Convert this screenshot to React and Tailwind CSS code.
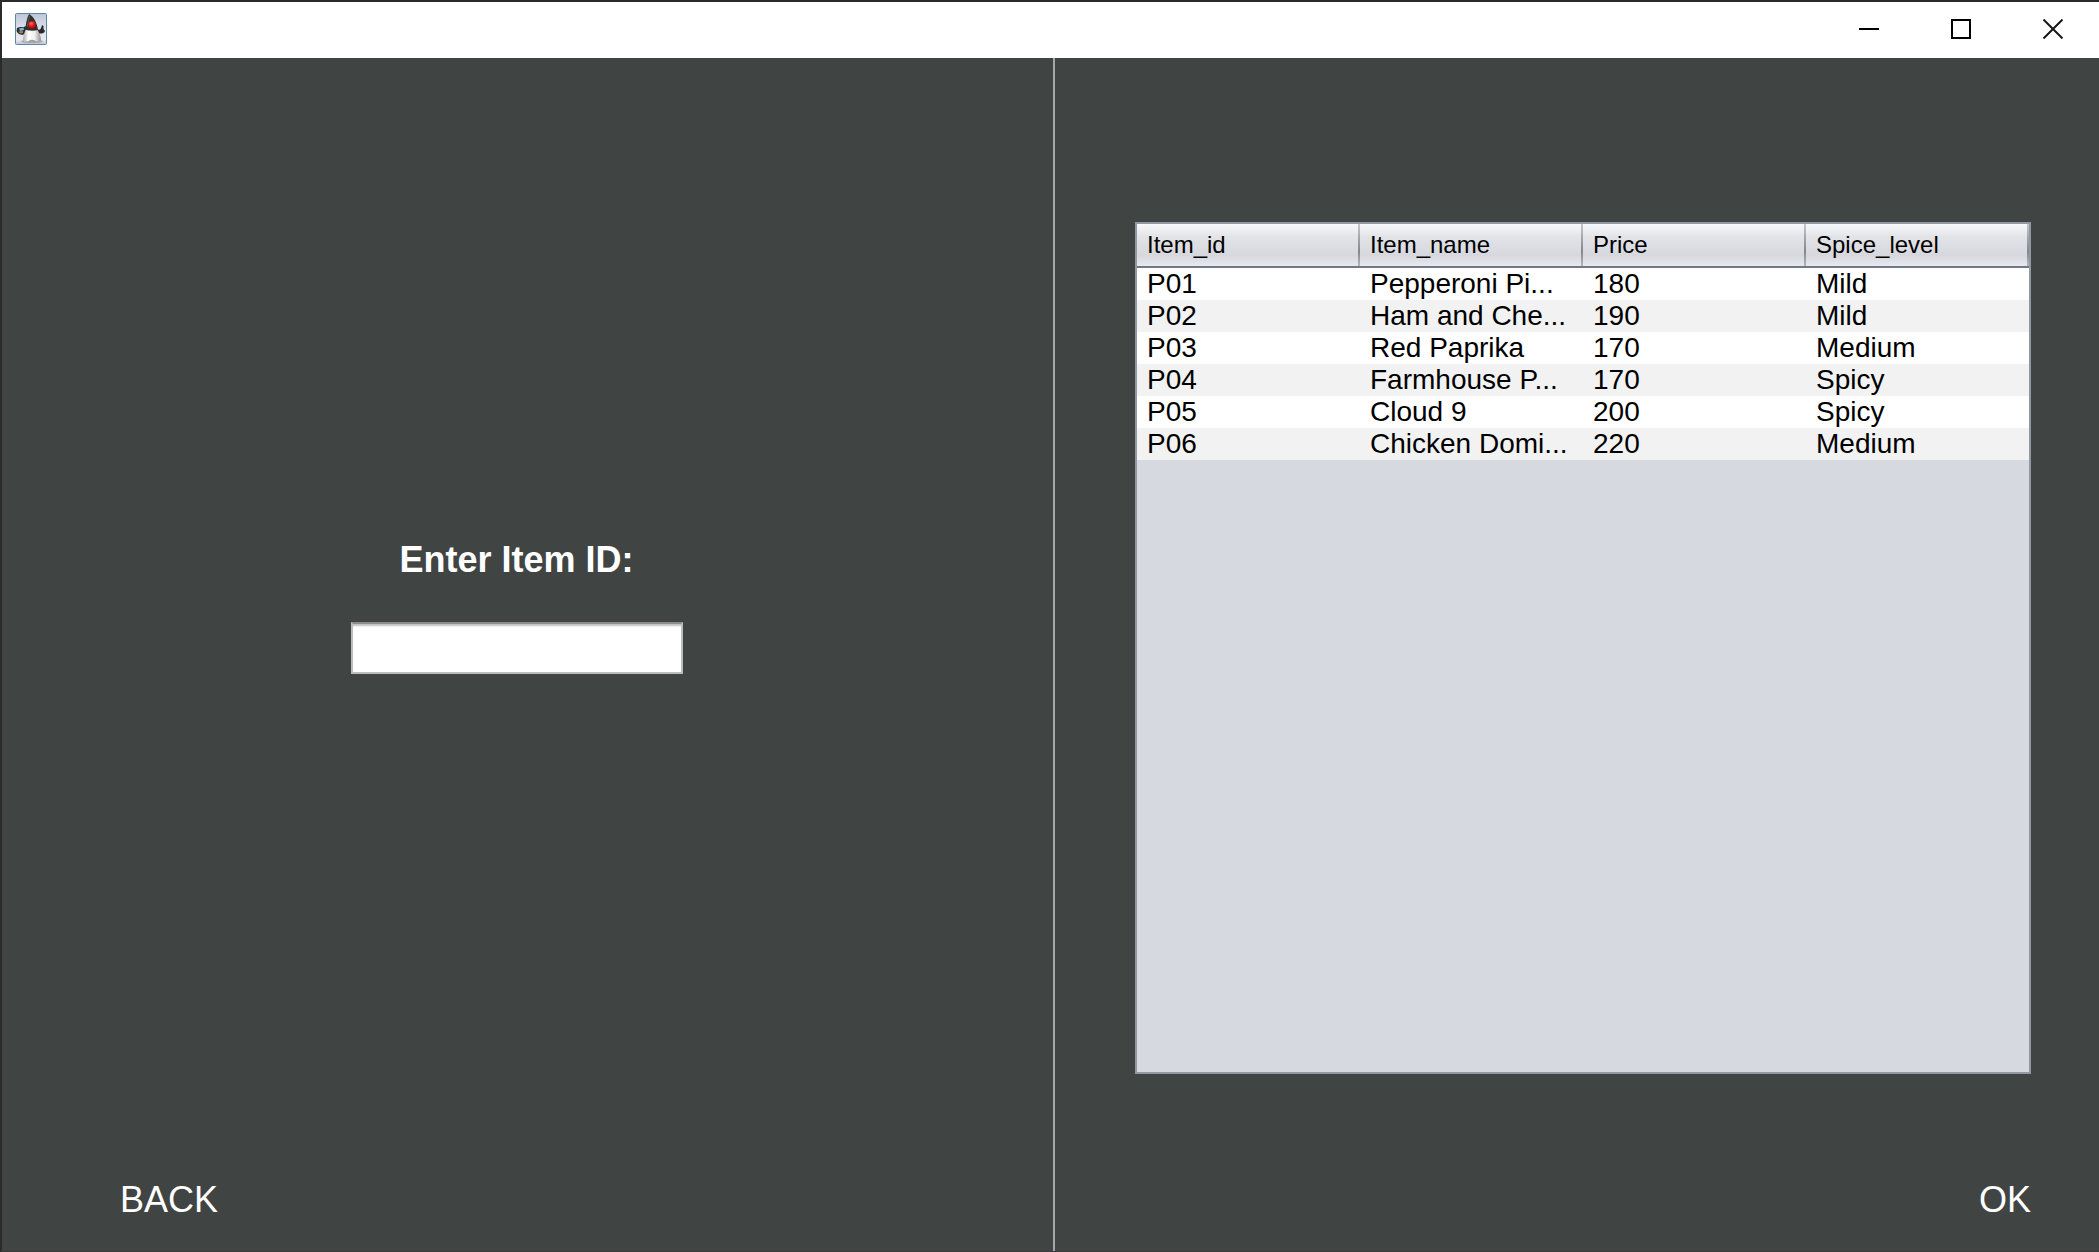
import React from "react";

const columns = ["Item_id", "Item_name", "Price", "Spice_level"];

const items = [
  ["P01", "Pepperoni Pi...", "180", "Mild"],
  ["P02", "Ham and Che...", "190", "Mild"],
  ["P03", "Red Paprika", "170", "Medium"],
  ["P04", "Farmhouse P...", "170", "Spicy"],
  ["P05", "Cloud 9", "200", "Spicy"],
  ["P06", "Chicken Domi...", "220", "Medium"],
];

function DukeIcon() {
  return (
    <svg className="size-8" viewBox="0 0 32 32" aria-hidden="true">
      <defs>
        <linearGradient id="tile" x1="0" y1="0" x2="0" y2="1">
          <stop offset="0" stopColor="#bcc6d8" />
          <stop offset="0.5" stopColor="#dde2ec" />
          <stop offset="0.85" stopColor="#e6e8ee" />
          <stop offset="1" stopColor="#bfc3cc" />
        </linearGradient>
        <linearGradient id="belly" x1="0" y1="0" x2="1" y2="0">
          <stop offset="0" stopColor="#a9a9a9" />
          <stop offset="0.3" stopColor="#ffffff" />
          <stop offset="0.65" stopColor="#efefef" />
          <stop offset="1" stopColor="#8f8f8f" />
        </linearGradient>
        <radialGradient id="nose" cx="0.4" cy="0.3" r="0.7">
          <stop offset="0" stopColor="#ff6a5c" />
          <stop offset="0.5" stopColor="#e81c1c" />
          <stop offset="1" stopColor="#9c0808" />
        </radialGradient>
      </defs>
      <rect x="0.5" y="0.5" width="31" height="31" rx="1" fill="url(#tile)" stroke="#5f87a3" />
      <ellipse cx="17" cy="28.5" rx="11" ry="1.6" fill="#a4a7ae" />
      <path d="M11 13 C8 15 5 13 2 15 L1.5 18 C3 22 8 23 11 20Z" fill="#2c2c2c" />
      <path d="M4 15.5 L8.5 14.5 L9 17 L5 18Z" fill="#78b4dc" />
      <path d="M3.5 18.5 L8 18 L8 20 L5 20.5Z" fill="#a8864f" />
      <path d="M22 16 C25 18 26 16 27 12 L28.5 13 L28.5 16 L30 18 C29 21 25 21 23 20Z" fill="#292929" />
      <path d="M11 16 C9 20 8 24 8 27 C8.500 29 12 28.500 14 28 L20 28 C23 28.800 26 28.500 26 27 C26 23 24 19 22 16Z" fill="url(#belly)" />
      <path d="M14 28.300 C15 27 19 27 20 28.300" fill="none" stroke="#8f8f8f" />
      <path d="M14 1 C18 3 22 9 23 17 C19 18 13 18 10.500 16.500 C10.500 11 12 5 14 1Z" fill="#303030" />
      <path d="M14.500 3 C14 7 13 10 12 14" fill="none" stroke="#585858" />
      <circle cx="17" cy="12" r="3.800" fill="url(#nose)" />
    </svg>
  );
}

function WindowButton({ label, children }) {
  return (
    <button type="button" aria-label={label} className="flex w-[92px] items-center justify-center hover:bg-gray-200">
      <svg className="size-5" viewBox="0 0 20 20" fill="none" stroke="#000" strokeWidth="2" aria-hidden="true">
        {children}
      </svg>
    </button>
  );
}

function TitleBar() {
  return (
    <header className="flex h-14 shrink-0 justify-between bg-white pb-0.5 pl-[13px]">
      <div className="flex items-center">
        <DukeIcon />
      </div>
      <div className="flex">
        <WindowButton label="Minimize">
          <path d="M0 10H20" />
        </WindowButton>
        <WindowButton label="Maximize">
          <path d="M1 1H19V19H1Z" />
        </WindowButton>
        <WindowButton label="Close">
          <path d="M0.5 0.5L19.5 19.5M19.5 0.5L0.5 19.5" stroke="#14181a" />
        </WindowButton>
      </div>
    </header>
  );
}

function ItemTable() {
  return (
    <div className="flex-1 border-2 border-[#9297a1] bg-[#d6d9e0]">
      <table className="w-full table-fixed border-separate border-spacing-0 text-left text-black">
        <thead>
          <tr className="h-11 bg-[linear-gradient(to_bottom,#f8f9fb_0%,#e2e3e7_30%,#d6d8dd_72%,#e9ecf4_100%)]">
            {columns.map((name) => (
              <th
                key={name}
                scope="col"
                className="border-b-2 border-b-[#74777f] bg-[linear-gradient(to_bottom,#c4c7cc,#82868d_65%,#b3b6bd)] bg-[length:2px_100%] bg-right bg-no-repeat px-2.5 py-0 text-2xl/8 font-normal"
              >
                {name}
              </th>
            ))}
          </tr>
        </thead>
        <tbody>
          {items.map((row) => (
            <tr key={row[0]} className="h-8 odd:bg-white even:bg-[#f2f2f2]">
              {row.map((cell, i) => (
                <td key={i} className="overflow-hidden px-2.5 py-0 text-[28px]/8 whitespace-nowrap">
                  {cell}
                </td>
              ))}
            </tr>
          ))}
        </tbody>
      </table>
    </div>
  );
}

export default function App() {
  return (
    <div className="flex min-h-screen flex-col border-t-2 border-b border-l-2 border-[#2b2b2b] border-b-[#3b3a3d] bg-[#404443] font-['Liberation_Sans',Arial,sans-serif]">
      <TitleBar />
      <main className="grid flex-1 grid-cols-[1053fr_1044fr]">
        <section className="flex flex-col border-r-2 border-[#a3a6ab] pb-[31px]">
          <form className="flex flex-1 flex-col items-center justify-center gap-[42px] pr-[22px] pb-6">
            <label htmlFor="item-id" className="text-4xl/10 font-bold text-white">
              Enter Item ID:
            </label>
            <input
              id="item-id"
              type="text"
              className="h-[52px] w-[332px] border-2 border-[#bcbcbc] border-t-[#8d8d8d] bg-white px-3 text-[28px] text-black shadow-[inset_0_3px_2px_-1px_#c0c0c4] outline-none"
            />
          </form>
          <button type="button" className="ml-[118px] self-start text-4xl/10 text-white">
            BACK
          </button>
        </section>
        <section className="flex flex-col pt-[164px] pr-[68px] pb-[31px] pl-20">
          <ItemTable />
          <button type="button" className="mt-[106px] self-end text-4xl/10 text-white">
            OK
          </button>
        </section>
      </main>
    </div>
  );
}
